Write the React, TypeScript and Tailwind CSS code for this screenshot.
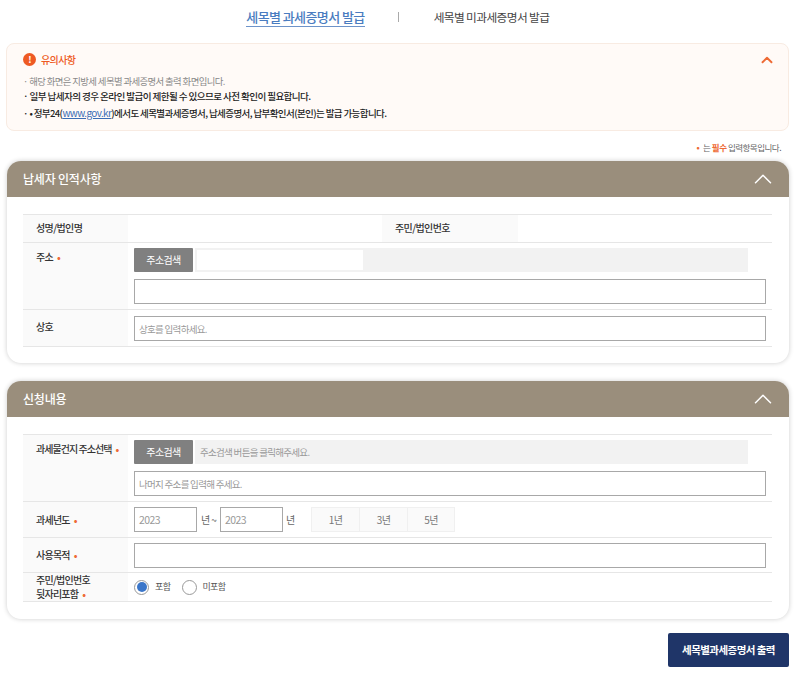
import { ChevronUp } from 'lucide-react'
import type { ReactNode } from 'react'

const Req = () => <span className="ml-1 text-[10px] font-bold text-[#ee6a35]">•</span>

function Row({ label, req, children, className }: { label: ReactNode; req?: boolean; children: ReactNode; className: string }) {
  return (
    <div className={`flex border-b border-[#e6e6e6] ${className}`}>
      <div className="w-[105px] shrink-0 bg-[#fafafa] pl-[13px] font-medium tracking-[-0.75px] text-[#333]">
        {label}
        {req && <Req />}
      </div>
      <div className="min-w-0 flex-1 pl-[6px]">{children}</div>
    </div>
  )
}

function Card({ title, className, children }: { title: string; className: string; children: ReactNode }) {
  return (
    <section className={`mx-[7px] w-[782px] rounded-[14px] bg-white shadow-[0_0_5px_rgba(0,0,0,0.2)] ${className}`}>
      <div className="flex h-[36px] items-center justify-between rounded-t-[14px] bg-[#9a8e7c] pl-[16px] pr-[11px] text-[12px] font-medium tracking-[-0.2px] text-white">
        {title}
        <ChevronUp size={30} strokeWidth={1.2} />
      </div>
      <div className="mx-[16px] mt-[17px] w-[749px] border-t border-[#e6e6e6] text-[10px] tracking-[-0.6px]">{children}</div>
    </section>
  )
}

function SearchButton() {
  return <button className="h-[24px] w-[59px] shrink-0 rounded-[1px] bg-[#808080] text-[10px] leading-none text-white">주소검색</button>
}

function TextInput({ placeholder, className = 'w-[632px]' }: { placeholder?: string; className?: string }) {
  return (
    <div className={`flex h-[25px] items-center border border-[#a8a8a8] pl-[4px] text-[9.5px] tracking-[-0.7px] text-[#999] ${className}`}>{placeholder}</div>
  )
}

function YearInput() {
  return <div className="flex h-[25px] w-[63px] items-center border border-[#a8a8a8] pl-[4px] text-[10.5px] text-[#999]">2023</div>
}

function YearButton({ label, last }: { label: string; last?: boolean }) {
  return (
    <div className={`flex h-[25px] w-[48px] items-center justify-center border-y border-l border-[#f0f0f0] bg-[#fafafa] text-[#777] ${last ? 'border-r' : ''}`}>
      {label}
    </div>
  )
}

export default function App() {
  return (
    <div className="h-[676px] w-[800px] overflow-hidden bg-white font-['Noto_Sans_CJK_KR','Noto_Sans',sans-serif]">
      <div className="flex h-[43px] items-start pt-[9px] tracking-[-0.6px]">
        <div className="ml-[246px] w-[119px] border-b border-[#6d93c9] pb-[1px] text-center text-[13px] font-medium leading-[16px] text-[#4a7cc0]">세목별 과세증명서 발급</div>
        <div className="ml-[33px] mt-[3px] h-[10px] w-px bg-[#aaa]" />
        <div className="ml-[34px] w-[117px] whitespace-nowrap text-center text-[11.7px] leading-[16px] text-[#444]">세목별 미과세증명서 발급</div>
      </div>

      <div className="mx-[6px] h-[88px] w-[783px] rounded-[8px] border border-[#f8ebe2] bg-[#fffaf7] pl-[16px] pr-[12px] pt-[7px] tracking-[-0.6px]">
        <div className="flex h-[17px] items-center">
          <span className="flex h-[13px] w-[13px] items-center justify-center rounded-full bg-[#ee5a24] text-[9px] font-bold text-white">!</span>
          <span className="ml-[5px] flex-1 text-[10px] font-medium text-[#ee5a24]">유의사항</span>
          <ChevronUp size={18} strokeWidth={2.5} className="text-[#ee6a35]" />
        </div>
        <div className="mt-[6px] text-[9.4px] leading-[15px] text-[#888]">· 해당 화면은 지방세 세목별 과세증명서 출력 화면입니다.</div>
        <div className="text-[9.6px] font-medium leading-[15.5px] text-[#222]">· 일부 납세자의 경우 온라인 발급이 제한될 수 있으므로 사전 확인이 필요합니다.</div>
        <div className="text-[9.5px] font-medium leading-[15.5px] text-[#222]">· • 정부24(<span className="text-[10px] font-normal text-[#3a6db5] underline">www.gov.kr</span>)에서도 세목별과세증명서, 납세증명서, 납부확인서(본인)는 발급 가능합니다.</div>
      </div>

      <div className="mr-[19px] mt-[9px] flex h-[14px] items-center justify-end text-[8.5px] tracking-[-0.5px] text-[#666]">
        <span className="mr-[4px] font-bold text-[#ee6a35]">•</span>는&nbsp;<b className="text-[#ee6a35]">필수</b>&nbsp;입력항목입니다.
      </div>

      <Card title="납세자 인적사항" className="mt-[7px] h-[202px]">
        <div className="flex h-[28px] items-center border-b border-[#e6e6e6]">
          <div className="flex h-full w-[105px] items-center bg-[#fafafa] pb-[3px] pl-[13px] font-medium text-[#333]">성명/법인명</div>
          <div className="w-[254px]" />
          <div className="flex h-full w-[136px] items-center bg-[#fafafa] pb-[3px] pl-[13px] font-medium text-[#333]">주민/법인번호</div>
        </div>
        <Row label="주소" req className="h-[67px] leading-[28px]">
          <div className="mt-[5px] flex gap-[2px]">
            <SearchButton />
            <div className="h-[24px] w-[553px] bg-[#f2f2f2] py-[2px] pl-[2px]">
              <div className="h-[20px] w-[166px] bg-white" />
            </div>
          </div>
          <div className="mt-[7px]"><TextInput /></div>
        </Row>
        <Row label="상호" className="h-[37px] leading-[34px]">
          <div className="mt-[6px] leading-[14px]"><TextInput placeholder="상호를 입력하세요." /></div>
        </Row>
      </Card>

      <Card title="신청내용" className="mt-[18px] h-[238px]">
        <Row label={<span className="tracking-[-0.95px]">과세물건지 주소선택</span>} req className="h-[67px] leading-[28px]">
          <div className="mt-[5px] flex gap-[2px]">
            <SearchButton />
            <div className="flex h-[24px] w-[553px] items-center bg-[#f2f2f2] pl-[5px] text-[9.5px] leading-[14px] tracking-[-0.7px] text-[#999]">주소검색 버튼을 클릭해주세요.</div>
          </div>
          <div className="mt-[7px] leading-[14px]"><TextInput placeholder="나머지 주소를 입력해 주세요." /></div>
        </Row>
        <Row label="과세년도" req className="h-[36px] leading-[35px]">
          <div className="mt-[5px] flex items-center leading-[14px] text-[#666]">
            <YearInput />
            <span className="mx-[1px] w-[21px] text-center">년 ~</span>
            <YearInput />
            <span className="ml-[3px] w-[25px]">년</span>
            <YearButton label="1년" />
            <YearButton label="3년" />
            <YearButton label="5년" last />
          </div>
        </Row>
        <Row label="사용목적" req className="h-[35px] leading-[34px]">
          <div className="mt-[5px]"><TextInput /></div>
        </Row>
        <Row label={<>주민/법인번호<br />뒷자리포함</>} req className="h-[29px] leading-[14px]">
          <div className="flex h-full items-center text-[#555]">
            <span className="flex h-[15px] w-[15px] items-center justify-center rounded-full border border-[#999]">
              <span className="h-[10px] w-[10px] rounded-full bg-[#3b76c9]" />
            </span>
            <span className="ml-[6px] text-[9px]">포함</span>
            <span className="ml-[12px] h-[15px] w-[15px] rounded-full border border-[#999]" />
            <span className="ml-[5px] text-[9px]">미포함</span>
          </div>
        </Row>
      </Card>

      <div className="mr-[11px] mt-[14px] flex justify-end">
        <button className="h-[34px] w-[121px] rounded-[2px] bg-[#1f3568] text-[10.5px] font-semibold tracking-[-0.55px] text-white">세목별과세증명서 출력</button>
      </div>
    </div>
  )
}
